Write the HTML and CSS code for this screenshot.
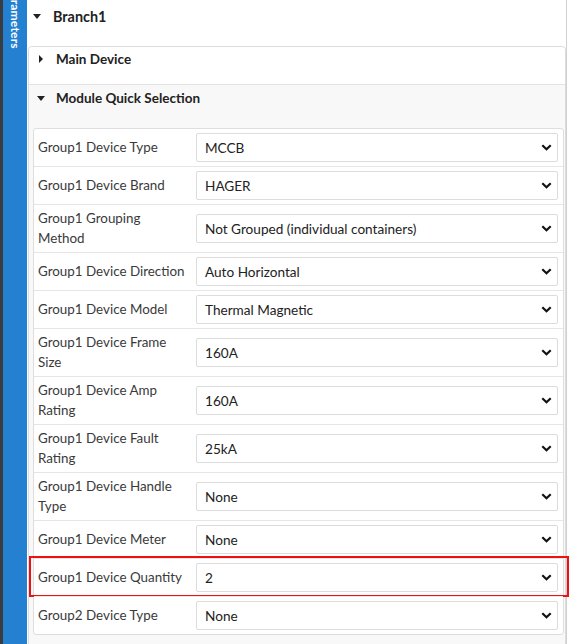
FILE: index.html
```html
<!DOCTYPE html>
<html>
<head>
<meta charset="utf-8">
<link rel="stylesheet" href="styles.css">
</head>
<body>
<div class="app">
  <aside class="side"><span class="side-label">Parameters</span></aside>
  <main class="content">
    <div class="branch-head">
      <svg class="caret-down" width="8" height="5" viewBox="0 0 8 5"><path d="M0 0 L8 0 L4 5 Z" fill="#222"/></svg>
      <span>Branch1</span>
    </div>
    <div class="panel">
      <div class="panel-head">
        <svg class="caret-right" width="4" height="8" viewBox="0 0 4 8"><path d="M0 0 L4 4 L0 8 Z" fill="#222"/></svg>
        <span>Main Device</span>
      </div>
      <div class="sub-head">
        <svg class="caret-down2" width="8" height="5" viewBox="0 0 8 5"><path d="M0 0 L8 0 L4 5 Z" fill="#222"/></svg>
        <span>Module Quick Selection</span>
      </div>
      <div class="sub-body">
        <div class="table">
          <div class="row"><div class="label">Group1 Device Type</div><div class="field"><div class="select"><span>MCCB</span><svg class="chev" width="11" height="7" viewBox="0 0 11 7"><path d="M1.3 1.3 L5.5 5.3 L9.7 1.3" fill="none" stroke="#111" stroke-width="2.2"/></svg></div></div></div>
          <div class="row"><div class="label">Group1 Device Brand</div><div class="field"><div class="select"><span>HAGER</span><svg class="chev" width="11" height="7" viewBox="0 0 11 7"><path d="M1.3 1.3 L5.5 5.3 L9.7 1.3" fill="none" stroke="#111" stroke-width="2.2"/></svg></div></div></div>
          <div class="row"><div class="label">Group1 Grouping Method</div><div class="field"><div class="select"><span>Not Grouped (individual containers)</span><svg class="chev" width="11" height="7" viewBox="0 0 11 7"><path d="M1.3 1.3 L5.5 5.3 L9.7 1.3" fill="none" stroke="#111" stroke-width="2.2"/></svg></div></div></div>
          <div class="row"><div class="label">Group1 Device Direction</div><div class="field"><div class="select"><span>Auto Horizontal</span><svg class="chev" width="11" height="7" viewBox="0 0 11 7"><path d="M1.3 1.3 L5.5 5.3 L9.7 1.3" fill="none" stroke="#111" stroke-width="2.2"/></svg></div></div></div>
          <div class="row"><div class="label">Group1 Device Model</div><div class="field"><div class="select"><span>Thermal Magnetic</span><svg class="chev" width="11" height="7" viewBox="0 0 11 7"><path d="M1.3 1.3 L5.5 5.3 L9.7 1.3" fill="none" stroke="#111" stroke-width="2.2"/></svg></div></div></div>
          <div class="row"><div class="label">Group1 Device Frame Size</div><div class="field"><div class="select"><span>160A</span><svg class="chev" width="11" height="7" viewBox="0 0 11 7"><path d="M1.3 1.3 L5.5 5.3 L9.7 1.3" fill="none" stroke="#111" stroke-width="2.2"/></svg></div></div></div>
          <div class="row"><div class="label">Group1 Device Amp Rating</div><div class="field"><div class="select"><span>160A</span><svg class="chev" width="11" height="7" viewBox="0 0 11 7"><path d="M1.3 1.3 L5.5 5.3 L9.7 1.3" fill="none" stroke="#111" stroke-width="2.2"/></svg></div></div></div>
          <div class="row"><div class="label">Group1 Device Fault Rating</div><div class="field"><div class="select"><span>25kA</span><svg class="chev" width="11" height="7" viewBox="0 0 11 7"><path d="M1.3 1.3 L5.5 5.3 L9.7 1.3" fill="none" stroke="#111" stroke-width="2.2"/></svg></div></div></div>
          <div class="row"><div class="label">Group1 Device Handle Type</div><div class="field"><div class="select"><span>None</span><svg class="chev" width="11" height="7" viewBox="0 0 11 7"><path d="M1.3 1.3 L5.5 5.3 L9.7 1.3" fill="none" stroke="#111" stroke-width="2.2"/></svg></div></div></div>
          <div class="row"><div class="label">Group1 Device Meter</div><div class="field"><div class="select"><span>None</span><svg class="chev" width="11" height="7" viewBox="0 0 11 7"><path d="M1.3 1.3 L5.5 5.3 L9.7 1.3" fill="none" stroke="#111" stroke-width="2.2"/></svg></div></div></div>
          <div class="row highlight"><div class="label">Group1 Device Quantity</div><div class="field"><div class="select"><span>2</span><svg class="chev" width="11" height="7" viewBox="0 0 11 7"><path d="M1.3 1.3 L5.5 5.3 L9.7 1.3" fill="none" stroke="#111" stroke-width="2.2"/></svg></div></div></div>
          <div class="row"><div class="label">Group2 Device Type</div><div class="field"><div class="select"><span>None</span><svg class="chev" width="11" height="7" viewBox="0 0 11 7"><path d="M1.3 1.3 L5.5 5.3 L9.7 1.3" fill="none" stroke="#111" stroke-width="2.2"/></svg></div></div></div>
        </div>
      </div>
    </div>
  </main>
</div>
</body>
</html>
```

FILE: styles.css
```css
* { box-sizing: border-box; }
html, body { margin: 0; padding: 0; background: #fff; }
body { font-family: Lato, "Open Sans", "Liberation Sans", sans-serif; color: #333; }

.app {
  display: flex;
  width: 573px;
  height: 644px;
  overflow: hidden;
}

.side {
  width: 27px;
  flex: none;
  background: #2481d1;
  border-left: 3px solid #3a3d40;
  display: flex;
  justify-content: center;
  overflow: hidden;
}
.side-label {
  writing-mode: vertical-rl;
  color: #fff;
  font-weight: 700;
  font-size: 12px;
  line-height: 14px;
  margin-top: -14px;
  letter-spacing: 0.2px;
  white-space: nowrap;
}

.content {
  width: 540px;
  flex: none;
  border-right: 1px solid #d0d0d0;
  padding-left: 1px;
}

.branch-head {
  height: 46px;
  padding: 8px 0 0 5px;
  display: flex;
  align-items: flex-start;
  font-size: 14.4px;
  font-weight: 700;
  color: #222;
  line-height: 18px;
}
.branch-head .caret-down { margin: 6px 12px 0 0; }

.panel {
  width: 538px;
  border: 1px solid #dcdcdc;
  border-radius: 4px 4px 2px 2px;
  background: #f8f8f8;
  height: 620px;
}

.panel-head {
  height: 38px;
  background: #fff;
  border-bottom: 1px solid #e3e3e3;
  border-radius: 4px 4px 0 0;
  padding: 3px 0 0 10px;
  display: flex;
  align-items: flex-start;
  font-size: 13.5px;
  font-weight: 700;
  color: #222;
  line-height: 18px;
}
.panel-head .caret-right { margin: 5px 13px 0 0; }

.sub-head {
  height: 38px;
  padding: 4px 0 0 8px;
  display: flex;
  align-items: flex-start;
  font-size: 13.5px;
  font-weight: 700;
  color: #222;
  line-height: 18px;
}
.sub-head .caret-down2 { margin: 7px 11px 0 0; }

.sub-body {
  padding: 5px 1px 2px 4px;
}

.table {
  border: 1px solid #dedede;
  border-radius: 3px;
  background: #fff;
}

.row {
  display: grid;
  grid-template-columns: 158px 1fr;
  border-top: 1px solid #e6e6e6;
  position: relative;
}
.row:first-child { border-top: none; }

.label {
  padding: 4px 6px 4px 4px;
  font-size: 13.4px;
  line-height: 19.5px;
  color: #3a3a3a;
  display: flex;
  align-items: center;
}

.field {
  padding: 4px 5px 4px 4px;
  display: flex;
  align-items: center;
}

.select {
  width: 100%;
  height: 29px;
  border: 1px solid #dcdcdc;
  border-radius: 2px;
  background: #fff;
  display: flex;
  align-items: center;
  justify-content: space-between;
  padding: 0 5px 0 8px;
  font-size: 13.6px;
  color: #222;
}
.chev { flex: none; }

.highlight::after {
  content: "";
  position: absolute;
  top: -3px;
  bottom: -1px;
  left: -5px;
  right: -6px;
  border: 2px solid #ee1111;
  pointer-events: none;
}
```
